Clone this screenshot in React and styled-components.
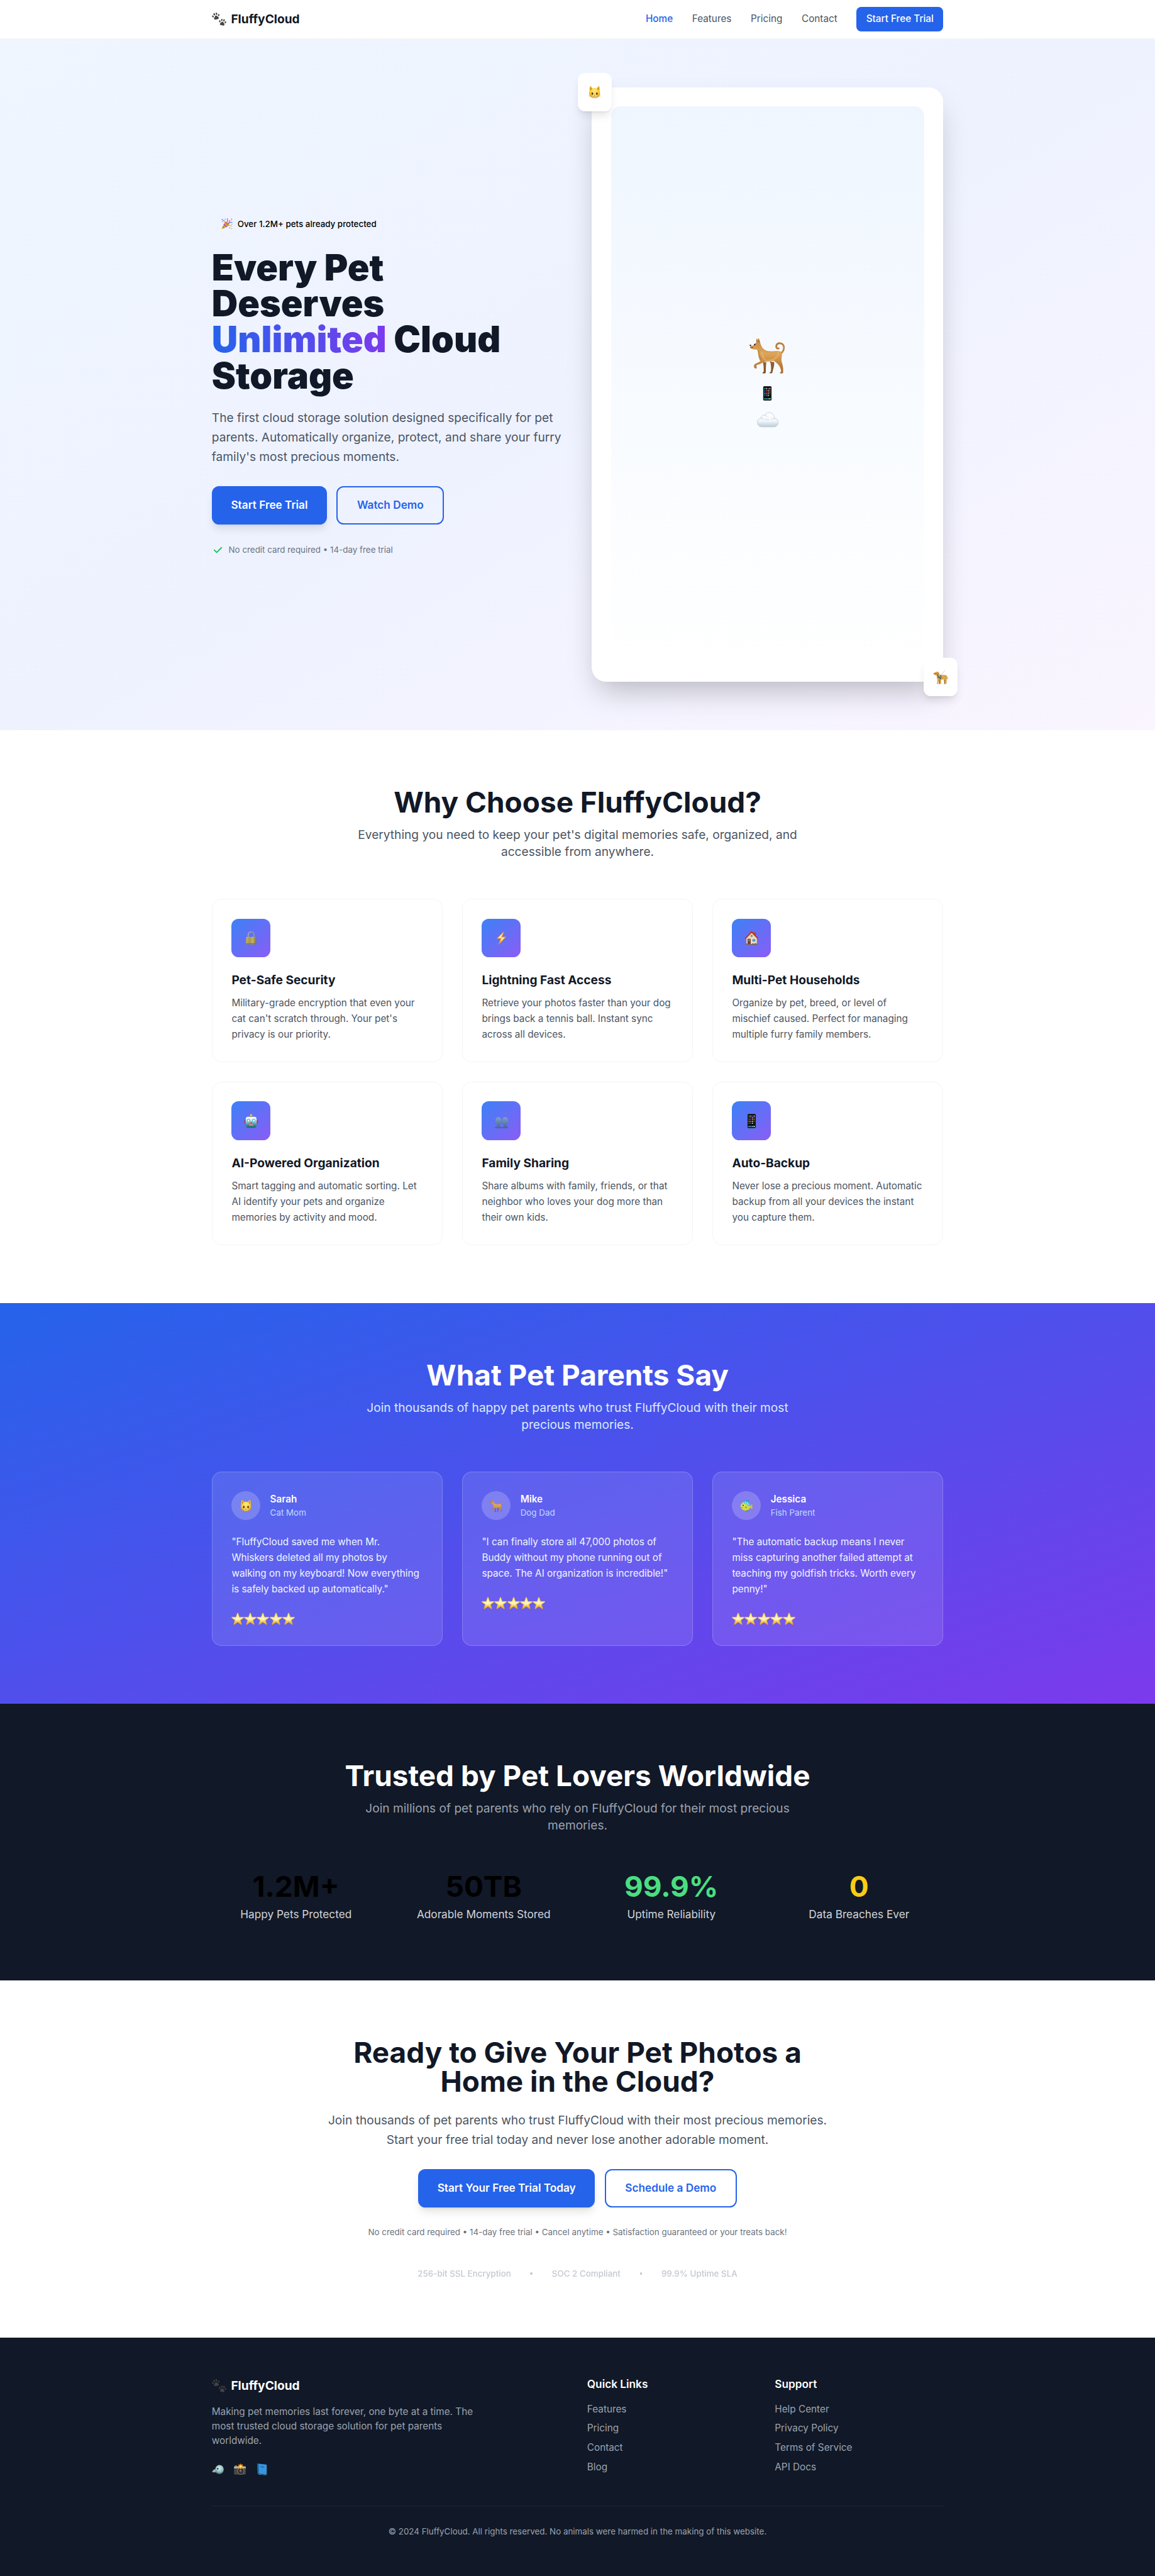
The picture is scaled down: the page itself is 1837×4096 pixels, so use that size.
import React from 'react';
import styled, { createGlobalStyle, css } from 'styled-components';

const GlobalStyle = createGlobalStyle`
  *, *::before, *::after { box-sizing: border-box; }
  html { font-size: 15.3083px; }
  body {
    margin: 0;
    background: #ffffff;
    color: #000000;
    font-family: Inter, "Liberation Sans", sans-serif;
    font-size: 1rem;
    line-height: 1.5rem;
    overflow-x: hidden;
  }
  h1, h2, h3, h4, p, ul { margin: 0; padding: 0; }
  ul { list-style: none; }
  a { color: inherit; text-decoration: none; }
`;

/* ---------- icons ---------- */

const Svg = styled.svg`
  display: block;
  flex: none;
  width: ${(p) => p.$size}rem;
  height: ${(p) => p.$size}rem;
  overflow: visible;
`;

const Paw = () => (
  <>
    <path d="M-3.9 4.1c-.5-2 1.6-2.6 2.3-4.2.6-1.3 2.6-1.300 3.200 0 .7 1.600 2.800 2.200 2.300 4.200-.4 1.500-2.100 1.300-3.900 1.300s-3.500.2-3.900-1.300z" />
    <ellipse cx="-4.9" cy="-.8" rx="1.250" ry="1.850" transform="rotate(-20 -4.900 -.8)" />
    <ellipse cx="-1.900" cy="-3.800" rx="1.300" ry="2" transform="rotate(-6 -1.900 -3.800)" />
    <ellipse cx="1.900" cy="-3.800" rx="1.300" ry="2" transform="rotate(6 1.900 -3.800)" />
    <ellipse cx="4.900" cy="-.8" rx="1.250" ry="1.850" transform="rotate(20 4.900 -.8)" />
  </>
);

const PawsIcon = ({ size, color }) => (
  <Svg $size={size} viewBox="0 0 24 24" fill={color}>
    <g transform="translate(6.700 7.100) rotate(-14)"><Paw /></g>
    <g transform="translate(17.700 17.200) rotate(10) scale(.96)"><Paw /></g>
  </Svg>
);

const PartyIcon = ({ size }) => (
  <Svg $size={size} viewBox="0 0 24 24">
    <path d="M7.500 7.500 16.500 16 1.500 23.200c-.8.3-1.300-.2-1-1z" fill="#f5b92e" />
    <path d="M6 11.500 12.600 18l-2.700 1.300-5.200-5zM3.700 16.700l3.700 3.800-2.400 1.100-2.200-2.500z" fill="#8a5bd0" />
    <ellipse cx="12" cy="11.800" rx="6.300" ry="2.500" transform="rotate(43 12 11.800)" fill="#d98a1c" />
    <path d="M11 10.500c2-2.500 3-6 1.500-9.500M13.500 12c3-1.500 4-4.500 3.500-7" stroke="#e0559b" strokeWidth="1.700" fill="none" strokeLinecap="round" />
    <path d="M14 12.500c2.500-2.500 5-4.500 9-4" stroke="#4c8fe6" strokeWidth="1.700" fill="none" strokeLinecap="round" />
    <path d="M15 14.500c2.500-.5 4.500.5 7 2.500" stroke="#f3c53a" strokeWidth="1.700" fill="none" strokeLinecap="round" />
    <path d="M1 2.500 7 6" stroke="#5a9cf0" strokeWidth="1.600" strokeLinecap="round" />
    <g fill="#e8639c"><circle cx="8" cy="2" r="1.100" /><circle cx="22" cy="2" r="1.200" /><circle cx="20" cy="5" r=".9" /></g>
    <g fill="#7a6be0"><circle cx="3" cy="7.500" r="1" /><circle cx="18" cy="20.500" r="1.100" /></g>
    <g fill="#ef7e4a"><circle cx="22.500" cy="13" r="1" /><circle cx="22" cy="22" r="1" /></g>
  </Svg>
);

const CatIcon = ({ size }) => (
  <Svg $size={size} viewBox="0 0 24 24">
    <defs>
      <radialGradient id="cat-fur" cx=".5" cy=".4" r=".65">
        <stop offset="0" stopColor="#ffe98a" /><stop offset=".55" stopColor="#f8cf3c" /><stop offset="1" stopColor="#d99a14" />
      </radialGradient>
    </defs>
    <path d="M3.600 1.700c.3-1 1.200-.9 2 0l3 3.200a16 16 0 0 1 6.800 0l3-3.200c.8-.9 1.700-1 2 0 .8 2.800.8 6 .5 8.300 1 2.200 1.100 4.500.3 6.700-1.300 3.400-4.500 5.600-9.200 5.600s-7.900-2.200-9.200-5.600c-.8-2.200-.7-4.500.3-6.700C2.800 7.700 2.800 4.500 3.600 1.700z" fill="url(#cat-fur)" />
    <path d="M4.700 3.300 7.300 6 4.600 8.700zM19.300 3.300 16.700 6l2.700 2.700z" fill="#c5800f" />
    <ellipse cx="8" cy="14.300" rx="1.300" ry="2.100" fill="#3a2408" />
    <ellipse cx="16" cy="14.300" rx="1.300" ry="2.100" fill="#3a2408" />
    <ellipse cx="12" cy="19" rx="3.600" ry="2.200" fill="#ffeeb0" />
    <path d="M10.900 16.800h2.200L12 18z" fill="#b25d3c" />
    <path d="M12 18v1c-.5 1-1.800 1.100-2.500.4M12 19c.5 1 1.800 1.100 2.500.4" stroke="#7a4a14" strokeWidth=".7" fill="none" strokeLinecap="round" />
    <path d="M1 17.500l3.500-.2M1.500 20l3.300-.9M23 17.500l-3.500-.2M22.500 20l-3.300-.9" stroke="#c79534" strokeWidth=".5" />
  </Svg>
);

const DogIcon = ({ size }) => (
  <Svg $size={size} viewBox="0 0 60 60">
    <defs>
      <linearGradient id="dog-coat" x1="0" y1="0" x2="0" y2="1">
        <stop offset="0" stopColor="#c78a45" /><stop offset=".45" stopColor="#dda558" /><stop offset="1" stopColor="#a8642c" />
      </linearGradient>
      <linearGradient id="dog-far" x1="0" y1="0" x2="0" y2="1">
        <stop offset="0" stopColor="#9c622e" /><stop offset="1" stopColor="#7d4a22" />
      </linearGradient>
    </defs>
    <path d="M34 39c3 1.500 5 1.500 7 1 .6 5-.5 9-1.800 13l-1 4c.2 1.300-.6 2-2 2h-2.600c-.3-1.300.7-2 2-2.400.8-5.600.6-11-1.600-17.600z" fill="url(#dog-far)" />
    <path d="M22 39c2 1.500 4.500 2 6 1.500-.6 5.500-1 11-.9 16.500.2 1.500-.5 2.200-2 2.200h-3.200c-.2-1.500.7-2.100 1.800-2.500.2-6-.2-12-1.700-17.700z" fill="url(#dog-far)" />
    <path d="M52.600 26c4-3.500 5.800-9 4-13-2-4.500-9-5.200-11.400-1.200-2 3.800 1 7.400 3.400 5.900" fill="none" stroke="#bd7c3b" strokeWidth="2.900" strokeLinecap="round" />
    <path d="M52.200 25c3.600-3.500 5.200-8 3.600-11.600" fill="none" stroke="#e0a65c" strokeWidth="1" strokeLinecap="round" />
    <path d="M11.500 8.200c-.4-2.600-.3-5.300.6-7.200 1 .8 1.600 2 1.900 3.200.1-1.600.4-3 1.100-4 1.400 2.600 2.300 5.400 2.900 8.300 1.300 4.400 3 8.200 6 10.600 3.500 3 8 3.300 12.500 3.400 5.500 0 11-1.200 15 .4 2.600 1.200 3 5 2.300 8.700-.6 3.500-1 6.500.2 9.800 1.500 4.400 2.300 9 2 15.300.1 1.900-.7 2.600-2.200 2.600h-3c-.2-1.600.8-2.400 2.100-2.800-.6-5.600-3-10.300-6.700-13.700-2.400-2-3.800-2.500-5.400-4.600-5 1.400-11 1.700-16 1.700-3.200 1.800-6.600 3.600-10.400 4.800-2.400.8-3.400 1.700-2.800 3.200.6 1.200.9 2.700-.3 3.300-1.800.6-3.700-1.300-3.900-3.700-.1-2.300 1.300-3.800 3.300-4.700l7.400-3.500c-2-3.200-3.300-8.300-3.900-14-.3-2.800-1-5-2.600-6-2.500.9-5 .3-7.600-.7-1.800-.6-3.100-1.700-3.100-3.300.2-1.300 1.500-1.800 3.200-1.900 2-.2 3.500-1.300 4.500-2.900.6-.9 1.700-2 2.900-2.300z" fill="url(#dog-coat)" />
    <path d="M20.500 24c1 5 2.500 10 6 13.500 8 1 15-1 19-5.500 2.500-3 3-6 2-8" fill="none" stroke="#e9ba72" strokeWidth="2.600" opacity=".6" strokeLinecap="round" />
    <path d="M15 21c.3 5.500 1.500 11 4.200 15.500" stroke="#b3783c" strokeWidth="1.800" fill="none" opacity=".7" />
    <path d="M12.100 7V2.900l1.100 4zM15.100 7.200l.3-4.600 1.200 5z" fill="#9a4936" />
    <ellipse cx="1.600" cy="12.600" rx="1.400" ry="1.200" fill="#2a2422" />
    <path d="M1.600 15.800c1.600.9 3.300.8 4.600-.2" stroke="#4a2d19" strokeWidth=".9" fill="none" />
    <circle cx="8.700" cy="11.500" r="1.200" fill="#23160e" />
  </Svg>
);

const GuideDogIcon = ({ size }) => (
  <Svg $size={size} viewBox="0 0 24 24">
    <path d="M12 9.500 18.800.6" stroke="#c9ccd2" strokeWidth=".8" />
    <path d="M12.500 10.500 17.500 3" stroke="#dfe1e5" strokeWidth=".5" />
    <path d="M8.500 16h2.600l-.4 6.700c0 .7-.3.9-.9.9H8c0-.8.400-1 .9-1.200zM17 16h2.500l-.2 6.700c0 .7-.3.9-.9.9h-1.600c0-.8.4-1 .9-1.200z" fill="#9a6a2c" />
    <path d="M.4 6.200c.7-1.400 2-2 3.200-2.300 2-1.500 4.700-.9 5.200 1.100.3 1.600.7 3 2.200 3.400 3.300.8 6.800-.4 9.500.4 1.800.7 2 3.200 2.800 4.900.4 1.200.4 2-.4 2.200-.8 0-1-1-1.300-1.900-.2 1.600 0 3 .1 4.400l-.4 4.300c0 .7-.3.9-.9.9h-1.700c0-.8.4-1.100 1-1.200l-.3-3.500-1.700-3.100c-2 .6-4 .8-5.400.7l-.1 6c0 .8-.3 1.100-.9 1.100H9.700c0-.9.4-1.200.9-1.300l-.3-5-1.700-1.500-1 6.700c-.1.800-.4 1.100-1 1.100H5c0-.9.300-1.200.8-1.300l.4-6.200c-.9-2-1-4.200-.9-6-.8 0-1.200-.3-1.600-1-1.300.3-2.800-.5-3.200-1.400-.3-.6-.3-1.100-.1-1.500z" fill="#dba447" />
    <path d="M6.200 5.300c1.500-.7 2.200.8 1.700 2.800-.3 1.200-1.300 1.600-1.900.8-.4-.9-.4-2.500.2-3.600z" fill="#b97d2c" />
    <path d="M5.700 8.800c2.500 1.600 4 4 5.500 7M12 8.600l-.3 7M5.600 12.500h7" stroke="#3d6070" strokeWidth="1.200" fill="none" />
    <circle cx=".8" cy="6.200" r=".7" fill="#2d211a" /><circle cx="3.700" cy="5.900" r=".6" fill="#2d211a" />
  </Svg>
);

const appRows = [
  ['#3ccf54', '#e8e8e8', '#b04cc8', '#f0f0f0'],
  ['#1e86f0', '#e0559b', '#e8e8e8', '#ef7e2e'],
  ['#2f9fe8', '#c04040', '#f0c030', '#3ccf54'],
  ['#e8b890', '#50c8e8', '#e8e8e8', '#d04848'],
  ['#2f7fe8', '#e04444', '#e8e8e8', '#333a44'],
];

const PhoneIcon = ({ size }) => (
  <Svg $size={size} viewBox="0 0 24 24">
    <rect x="5" y="0" width="14" height="24" rx="1.800" fill="#3a3d44" />
    <rect x="5.700" y=".7" width="12.600" height="22.600" rx="1.300" fill="#08090c" />
    {appRows.map((row, y) => row.map((fill, x) => (
      <rect key={`${x}-${y}`} x={6.9 + x * 2.8} y={2.9 + y * 3} width="1.800" height="1.800" rx=".4" fill={fill} />
    )))}
    <rect x="6.200" y="19.600" width="11.600" height="3" rx=".6" fill="#26343c" />
    <rect x="6.900" y="20.100" width="1.800" height="1.900" rx=".4" fill="#3ccf54" />
    <rect x="9.700" y="20.100" width="1.800" height="1.900" rx=".4" fill="#38a8f0" />
    <rect x="12.500" y="20.100" width="1.800" height="1.900" rx=".4" fill="#49d8a0" />
    <rect x="15.300" y="20.100" width="1.800" height="1.900" rx=".4" fill="#f0f0f0" />
  </Svg>
);

const CloudIcon = ({ size }) => (
  <Svg $size={size} viewBox="0 0 36 36">
    <defs>
      <linearGradient id="cloud-body" x1="0" y1="0" x2="0" y2="1">
        <stop offset="0" stopColor="#ffffff" /><stop offset=".6" stopColor="#f2f5f8" /><stop offset="1" stopColor="#bccbd8" />
      </linearGradient>
    </defs>
    <path d="M8.500 30C3.800 30 .6 27 .6 22.800c0-3.900 2.600-6.700 6-7.200.2-3.800 3.500-5.900 6.800-5.100C15 7.600 17.300 6.200 20.200 6.200c4.600 0 7.900 3 8.500 7.600.2.7.2 1.400.1 2 3.800.3 6.500 3.200 6.500 7 0 4.200-3.100 7.200-7.300 7.200z" fill="url(#cloud-body)" stroke="#b7c6d4" strokeWidth=".8" />
    <path d="M6.800 15.800c1.800-.4 3.800.2 5 1.800M13.500 10.800c1.500.4 2.600 1.300 3.300 2.400M14 19.500c.8-2 3-3 5.300-1.700M28.500 16c-1.700 0-3.200.7-4.300 2.200" fill="none" stroke="#c3d0dc" strokeWidth=".9" strokeLinecap="round" />
  </Svg>
);

const LockIcon = ({ size }) => (
  <Svg $size={size} viewBox="0 0 24 24">
    <defs>
      <linearGradient id="lock-brass" x1="0" y1="0" x2="1" y2="0">
        <stop offset="0" stopColor="#c9b756" /><stop offset=".4" stopColor="#aa9c52" /><stop offset=".65" stopColor="#cbbb66" /><stop offset="1" stopColor="#827536" />
      </linearGradient>
    </defs>
    <path d="M7.200 11V7.300C7.200 4.200 9 2 12 2s4.800 2.200 4.800 5.300V11" fill="none" stroke="#8d97a8" strokeWidth="2" />
    <path d="M6.700 10V7.300C6.700 3.900 8.800 1.600 12 1.600" fill="none" stroke="#bcc5d2" strokeWidth=".7" />
    <rect x="3.600" y="10.200" width="16.800" height="12.300" rx=".8" fill="url(#lock-brass)" />
    <path d="M3.600 20.500h16.800v1.200c0 .5-.3.800-.8.800H4.400c-.5 0-.8-.3-.8-.8z" fill="#7d7030" opacity=".7" />
    <path d="M3.600 13.500h16.800M3.600 17h16.800" stroke="#8f8240" strokeWidth=".4" />
  </Svg>
);

const BoltIcon = ({ size }) => (
  <Svg $size={size} viewBox="0 0 24 24">
    <path d="M17 .3 3.700 13.200h6.900L6.800 23.700 20.300 10h-7z" fill="#f29a16" />
    <path d="M15 3 6 12.200h6.300L9.600 19.500 17.800 11h-6.200z" fill="#ffe98a" />
  </Svg>
);

const HouseIcon = ({ size }) => (
  <Svg $size={size} viewBox="0 0 24 24">
    <rect x="15.500" y="2.500" width="3.300" height="6" fill="#9b4a36" />
    <path d="M3.300 12 12 3l8.700 9v10.500H3.300z" fill="#ead9b4" />
    <path d="M12 0 .7 12.200l1.500 1.400L12 3.600l9.800 10 1.500-1.400z" fill="#c2362b" />
    <circle cx="12" cy="8.600" r="1.500" fill="#4d79a8" />
    <rect x="5.200" y="13.300" width="5.200" height="9.200" fill="#7a4226" /><rect x="6.300" y="14.300" width="3" height="3" fill="#58869d" />
    <rect x="12.700" y="13.500" width="6" height="5" fill="#4f93cc" stroke="#fff7e4" strokeWidth=".7" />
    <path d="M1.500 22c1-1.500 2.800-1.500 3.500 0M12 22.500c1-2 3-2 4-.5 1-1.800 3.500-2 5.500.5z" fill="#568638" />
    <rect x="1.700" y="22" width="20.600" height="1.400" fill="#7d6a55" />
  </Svg>
);

const RobotIcon = ({ size }) => (
  <Svg $size={size} viewBox="0 0 24 24">
    <defs>
      <linearGradient id="robot-face" x1="0" y1="0" x2="0" y2="1">
        <stop offset="0" stopColor="#f6ffff" /><stop offset=".35" stopColor="#cdeeee" /><stop offset=".65" stopColor="#4aa3a8" /><stop offset="1" stopColor="#17626d" />
      </linearGradient>
    </defs>
    <rect x=".9" y="10.200" width="3" height="6.500" rx="1.200" fill="#b83246" /><rect x="20.100" y="10.200" width="3" height="6.500" rx="1.200" fill="#b83246" />
    <rect x="10" y="3" width="4" height="3" rx=".8" fill="#8a3a50" />
    <circle cx="12" cy="2.500" r="2.100" fill="#f8a51d" /><circle cx="11.600" cy="1.900" r=".9" fill="#ffe07a" />
    <path d="M6.500 5h11c2 0 3.300 1.300 3.400 3.200l.5 9.500c0 3.400-2 5.600-5 5.600H7.600c-3 0-5-2.200-5-5.600l.5-9.500C3.200 6.300 4.500 5 6.500 5z" fill="url(#robot-face)" />
    <circle cx="7.600" cy="11.500" r="2.900" fill="#2fb6d6" /><circle cx="16.400" cy="11.500" r="2.900" fill="#2fb6d6" />
    <circle cx="7.600" cy="11.500" r="1.700" fill="#f5ffff" /><circle cx="16.400" cy="11.500" r="1.700" fill="#f5ffff" />
    <path d="M12 12.500 14 16h-4z" fill="#d8403d" />
    <rect x="7.300" y="17" width="9.400" height="3" rx="1.400" fill="#a9423f" />
    <path d="M9.200 17.600v1.800M11 17.600v1.800M13 17.600v1.800M14.800 17.600v1.800" stroke="#eef2f2" strokeWidth="1.100" />
  </Svg>
);

const PeopleIcon = ({ size }) => (
  <Svg $size={size} viewBox="0 0 24 24">
    <defs>
      <linearGradient id="bust" x1="0" y1="0" x2="0" y2="1">
        <stop offset="0" stopColor="#7ba0d0" /><stop offset="1" stopColor="#46668c" />
      </linearGradient>
    </defs>
    <path d="M18.300 5.600c3 0 5 2.300 5 5.700 0 3.300-1.400 5.800-2.900 6.900v2c0 1.300 3 1.400 3 3.600H12.500c0-2.200 3.700-2.300 3.700-3.600v-2c-1.700-1.100-2.900-3.600-2.900-6.900 0-3.400 2-5.700 5-5.700z" fill="url(#bust)" />
    <path d="M7 5.600c3 0 5 2.300 5 5.700 0 3.300-1.400 5.800-2.900 6.900v2c0 1.300 3.700 1.400 3.700 3.600H.6c0-2.200 4.300-2.300 4.300-3.600v-2C3.200 17.100 2 14.600 2 11.300c0-3.400 2-5.700 5-5.700z" fill="url(#bust)" />
  </Svg>
);

const FishIcon = ({ size }) => (
  <Svg $size={size} viewBox="0 0 24 24">
    <path d="M9 4.500C11 1.800 14 .8 16.500 1.200c-.6 1.600-.2 3 .8 5z" fill="#2f9fb4" />
    <path d="M17.500 14.500c2-3.600 4-5 5.900-4.800-.7 2.300-.8 4.300.2 7.600-2.400.5-4.600-.3-6.100-2.800z" fill="#e0bf22" />
    <path d="M10 20c1 1.800 2.800 3 5 2.700-.4-1.400-.3-2.600.6-4z" fill="#3f8e50" />
    <path d="M.6 13C1.600 7.500 5.500 4 10.500 4c5 0 8.700 4 8.900 9-.3 4.600-4 8.200-8.900 8.200-4.700 0-8.400-2.700-9.900-8.200z" fill="#cfdc3c" />
    <path d="M6.500 4.800C12 2.300 19 5.500 19.400 13.200c-2.700.6-5.700-.9-6.600-3.700-2.800.2-5.500-1.200-6.300-4.700z" fill="#45c6dc" />
    <path d="M10 5c.2 2.300 1 3.500 2.300 4.200M13.800 5.500c.2 2.500 1.200 4.500 3 5.500" stroke="#e6fbfa" strokeWidth="1.100" fill="none" />
    <circle cx="6" cy="11.300" r="2.200" fill="#f7fbe8" /><circle cx="5.800" cy="11.400" r="1.300" fill="#16252a" />
    <path d="M1.500 15.300c1.300.6 2.600.4 3.500-.5" stroke="#6b8420" strokeWidth=".8" fill="none" />
    <path d="M9.500 13.500c2 0 3.600 1 4 3-2 .5-3.800-.3-4-3z" fill="#7daa32" />
  </Svg>
);

const StarIcon = ({ size }) => (
  <Svg $size={size} viewBox="0 0 24 24">
    <defs>
      <linearGradient id="star-gold" x1="0" y1="0" x2="0" y2="1">
        <stop offset="0" stopColor="#fbe48a" /><stop offset=".5" stopColor="#ffee8a" /><stop offset="1" stopColor="#eda30f" />
      </linearGradient>
    </defs>
    <path d="M12 .8c.5 0 .8.3 1 .9l2.300 6.900h7.400c1.200 0 1.400 1 .5 1.700l-5.900 4.400 2.200 7.200c.3 1-.5 1.500-1.400.9L12 18.400l-6.100 4.400c-.9.6-1.700.1-1.400-.9l2.200-7.200-5.900-4.400C-.1 9.600.1 8.600 1.300 8.600h7.400L11 1.700c.2-.6.5-.9 1-.9z" fill="url(#star-gold)" stroke="#e5a31c" strokeWidth=".6" />
    <path d="M12 5.500l1.800 5.300 5 .1-4.200 3 .9 3L12 14.500l-3.500 2.400.9-3-4.200-3 5-.1z" fill="#fffbdc" opacity=".7" />
  </Svg>
);

const BirdIcon = ({ size }) => (
  <Svg $size={size} viewBox="0 0 20 20">
    <defs>
      <radialGradient id="bird-head" cx=".5" cy=".35" r=".7">
        <stop offset="0" stopColor="#d5ecea" /><stop offset=".6" stopColor="#8fbcbe" /><stop offset="1" stopColor="#2f5e66" />
      </radialGradient>
    </defs>
    <path d="M7 8.500C4 9.500 1.500 11.500.2 14.200c2.300.9 5 .9 8 .3z" fill="#b9bfc2" />
    <path d="M1.500 13.500c2 .4 4 .3 6-.3" stroke="#6f7679" strokeWidth=".6" fill="none" />
    <path d="M5.600 9C6.500 5 9 2.600 12.500 2.600c4.200 0 7.200 3.300 7.200 7.700 0 4.300-3 7.400-7.200 7.400-3.400 0-6-1.500-6.700-4.300z" fill="url(#bird-head)" />
    <circle cx="10" cy="8.900" r="2" fill="#f4f7f6" /><circle cx="9.800" cy="9" r="1.300" fill="#17191b" />
  </Svg>
);

const CameraIcon = ({ size }) => (
  <Svg $size={size} viewBox="0 0 20 20">
    <rect x=".2" y="5" width="19.600" height="13.600" rx="1.600" fill="#4a4744" />
    <path d="M.2 8V6.600C.2 5.500.8 5 1.800 5h16.400c1 0 1.600.5 1.600 1.600V8z" fill="#b9b8b4" />
    <rect x="1.500" y="3.500" width="4" height="2" rx=".6" fill="#8a8883" />
    <circle cx="11.500" cy="12.800" r="5.700" fill="#8c8a86" /><circle cx="11.500" cy="12.800" r="4.700" fill="#26282b" />
    <circle cx="11.500" cy="12.800" r="2.600" fill="#49505b" /><circle cx="10.700" cy="12" r=".9" fill="#9aa6b5" />
    <path d="M11.200-.2l1.100 2.600 2.800-1.100-.9 2.700 2.500 1.200-2.600 1.200.9 2.600-2.700-1-1.100 2.500-1.200-2.500-2.600 1 .9-2.600-2.600-1.200 2.600-1.200-.9-2.700 2.600 1.100z" fill="#f59a1c" />
    <circle cx="11.200" cy="5.200" r="1.700" fill="#fff0a0" />
  </Svg>
);

const BookIcon = ({ size }) => (
  <Svg $size={size} viewBox="0 0 20 20">
    <path d="M4.500 18.300 16.300 19.400 18 18.500V3z" fill="#d7dde2" />
    <path d="M2.300.6 4.200.2 17.700 1.800 18 17.800 16.700 19.500 3 17.800z" fill="#195f9c" />
    <path d="M4.600.9 17.700 2.200 17.300 18 4.800 16.600z" fill="#3b97dc" />
    <path d="M2.300.6 4.600.9 4.800 16.600 3 17.600z" fill="#1a6cb0" />
    <path d="M7.500 4.500l6.800.7M8.500 6.500l4.800.5" stroke="#1c66a6" strokeWidth="1" />
  </Svg>
);

const CheckIcon = ({ size }) => (
  <Svg $size={size} viewBox="0 0 20 20" fill="#22c55e">
    <path fillRule="evenodd" clipRule="evenodd" d="M16.707 5.293a1 1 0 010 1.414l-8 8a1 1 0 01-1.414 0l-4-4a1 1 0 011.414-1.414L8 12.586l7.293-7.293a1 1 0 011.414 0z" />
  </Svg>
);

/* ---------- shared ---------- */

const Container = styled.div`
  max-width: 80rem;
  margin: 0 auto;
  padding: 0 2rem;
`;

const Button = styled.a`
  display: inline-flex;
  align-items: center;
  justify-content: center;
  white-space: nowrap;
  border-radius: 0.75rem;
  padding: 1rem 2rem;
  font-size: 1.125rem;
  line-height: 1.75rem;
  font-weight: 600;
  ${(p) => p.$outline
    ? css`
        border: 2px solid #2563eb;
        color: #2563eb;
      `
    : css`
        background: #2563eb;
        color: #ffffff;
        box-shadow: 0 0.625rem 0.9375rem -0.1875rem rgba(0, 0, 0, 0.1), 0 0.25rem 0.375rem -0.25rem rgba(0, 0, 0, 0.1);
      `}
`;

const ButtonRow = styled.div`
  display: flex;
  justify-content: ${(p) => (p.$center ? 'center' : 'flex-start')};
  gap: 1rem;
  height: 4rem;
  margin-top: 2rem;
`;

const SectionHeading = styled.div`
  text-align: center;
  margin-bottom: 4rem;
`;

const SectionTitle = styled.h2`
  font-size: 3rem;
  line-height: 1;
  font-weight: 700;
  color: ${(p) => p.$color || '#111827'};
`;

const SectionSub = styled.p`
  margin-top: 1rem;
  font-size: 1.25rem;
  line-height: 1.75rem;
  color: ${(p) => p.$color || '#4b5563'};
`;

const Brand = styled.div`
  display: flex;
  align-items: center;
  gap: 0.5rem;
  height: 2rem;
  font-size: 1.25rem;
  line-height: 1.75rem;
  font-weight: 700;
  color: ${(p) => p.$color};
`;

/* ---------- header ---------- */

const Header = styled.header`
  background: #ffffff;
  border-bottom: 1px solid #f3f4f6;
`;

const Bar = styled(Container)`
  display: flex;
  align-items: center;
  justify-content: space-between;
  height: 4rem;
`;

const Nav = styled.nav`
  display: flex;
  align-items: center;
  gap: 2rem;
`;

const NavLink = styled.a`
  color: ${(p) => (p.$active ? '#2563eb' : '#4b5563')};
  font-weight: ${(p) => (p.$active ? 500 : 400)};
`;

const NavButton = styled.a`
  background: #2563eb;
  color: #ffffff;
  font-weight: 500;
  padding: 0.5rem 1rem;
  border-radius: 0.5rem;
`;

/* ---------- hero ---------- */

const Hero = styled.section`
  background: linear-gradient(to bottom right, #eff6ff, #eef2ff, #faf5ff);
  padding: 5rem 0;
`;

const HeroGrid = styled(Container)`
  display: grid;
  grid-template-columns: 1fr 1fr;
  gap: 3rem;
  align-items: center;
`;

const Pill = styled.div`
  display: flex;
  align-items: center;
  gap: 0.5rem;
  height: 2.25rem;
  padding: 0 1rem;
  font-size: 0.875rem;
  font-weight: 500;
`;

const HeroTitle = styled.h1`
  margin-top: 1.5rem;
  font-size: 3.75rem;
  line-height: 1;
  font-weight: 900;
  color: #111827;
`;

const Gradient = styled.span`
  background: linear-gradient(to right, #2563eb, #7c3aed);
  -webkit-background-clip: text;
  background-clip: text;
  color: transparent;
`;

const Lead = styled.p`
  margin-top: 1.5rem;
  font-size: 1.25rem;
  line-height: 1.625;
  color: #4b5563;
`;

const Assurance = styled.div`
  display: flex;
  align-items: center;
  gap: 0.5rem;
  margin-top: 2rem;
  font-size: 0.875rem;
  line-height: 1.25rem;
  color: #6b7280;
`;

const Device = styled.div`
  position: relative;
  padding: 2rem;
  background: #ffffff;
  border-radius: 1.5rem;
  box-shadow: 0 1.5625rem 3.125rem -0.75rem rgba(0, 0, 0, 0.25);
`;

const Screen = styled.div`
  display: flex;
  flex-direction: column;
  align-items: center;
  justify-content: center;
  aspect-ratio: 9 / 16;
  border-radius: 1rem;
  background: linear-gradient(to bottom, #eff6ff, #ffffff);
`;

const ScreenItem = styled.div`
  display: flex;
  align-items: center;
  height: ${(p) => p.$height}rem;
  margin-top: ${(p) => p.$top || 0}rem;
`;

const FloatingBadge = styled.div`
  position: absolute;
  display: flex;
  align-items: center;
  justify-content: center;
  width: 3.55rem;
  height: 4rem;
  background: #ffffff;
  border-radius: 0.75rem;
  box-shadow: 0 0.625rem 0.9375rem -0.1875rem rgba(0, 0, 0, 0.1), 0 0.25rem 0.375rem -0.25rem rgba(0, 0, 0, 0.1);
  ${(p) => (p.$corner === 'start'
    ? css`top: -1.5rem; left: -1.5rem;`
    : css`bottom: -1.5rem; right: -1.5rem;`)}
`;

/* ---------- features ---------- */

const Section = styled.section`
  padding: 6rem 0;
  background: ${(p) => p.$bg || '#ffffff'};
`;

const CardGrid = styled.div`
  display: grid;
  grid-template-columns: repeat(3, 1fr);
  gap: 2rem;
`;

const FeatureCard = styled.article`
  padding: 2rem;
  border: 1px solid #f3f4f6;
  border-radius: 1rem;
  background: #ffffff;
`;

const FeatureIcon = styled.div`
  display: flex;
  align-items: center;
  justify-content: center;
  width: 4rem;
  height: 4rem;
  border-radius: 0.75rem;
  background: linear-gradient(to bottom right, #3b82f6, #8b5cf6);
`;

const FeatureTitle = styled.h3`
  margin-top: 1.5rem;
  font-size: 1.25rem;
  line-height: 1.75rem;
  font-weight: 700;
  color: #111827;
`;

const FeatureText = styled.p`
  margin-top: 0.75rem;
  line-height: 1.625;
  color: #4b5563;
`;

/* ---------- testimonials ---------- */

const QuoteCard = styled.article`
  padding: 2rem;
  border: 1px solid rgba(255, 255, 255, 0.2);
  border-radius: 1rem;
  background: rgba(255, 255, 255, 0.1);
`;

const Person = styled.div`
  display: flex;
  align-items: center;
  gap: 1rem;
`;

const Avatar = styled.div`
  display: flex;
  align-items: center;
  justify-content: center;
  width: 3rem;
  height: 3rem;
  border-radius: 50%;
  background: rgba(255, 255, 255, 0.2);
`;

const PersonName = styled.div`
  font-weight: 600;
  color: #ffffff;
`;

const PersonRole = styled.div`
  font-size: 0.875rem;
  line-height: 1.25rem;
  color: #bfdbfe;
`;

const Quote = styled.p`
  margin-top: 1.5rem;
  line-height: 1.625;
  color: #eff6ff;
`;

const Stars = styled.div`
  display: flex;
  align-items: center;
  height: 1.5rem;
  margin-top: 1.5rem;
`;

/* ---------- stats ---------- */

const StatGrid = styled.div`
  display: grid;
  grid-template-columns: repeat(4, 1fr);
  gap: 2rem;
  text-align: center;
`;

const StatValue = styled.div`
  font-size: 3rem;
  line-height: 1;
  font-weight: 700;
  color: ${(p) => p.$color};
`;

const StatLabel = styled.div`
  margin-top: 0.5rem;
  font-size: 1.125rem;
  line-height: 1.75rem;
  color: #d1d5db;
`;

/* ---------- call to action ---------- */

const Centered = styled(Container)`
  text-align: center;
`;

const FinePrint = styled.p`
  margin-top: 2rem;
  font-size: 0.875rem;
  line-height: 1.25rem;
  color: #6b7280;
`;

const TrustRow = styled.div`
  display: flex;
  align-items: center;
  justify-content: center;
  gap: 2rem;
  margin-top: 3rem;
  font-size: 0.875rem;
  line-height: 1.25rem;
  font-weight: 500;
  color: #9ca3af;
  opacity: 0.6;
`;

const TrustDot = styled.span`
  width: 0.25rem;
  height: 0.25rem;
  border-radius: 50%;
  background: #9ca3af;
`;

/* ---------- footer ---------- */

const Footer = styled.footer`
  padding: 4rem 0;
  background: #111827;
`;

const FooterGrid = styled.div`
  display: grid;
  grid-template-columns: repeat(4, 1fr);
  gap: 2rem;
`;

const FooterAbout = styled.div`
  grid-column: span 2;
`;

const Tagline = styled.p`
  max-width: 28rem;
  margin-top: 1rem;
  color: #9ca3af;
`;

const Socials = styled.div`
  display: flex;
  align-items: center;
  gap: 1.05rem;
  height: 1.5rem;
  margin-top: 1.5rem;
`;

const FooterTitle = styled.h4`
  font-size: 1.125rem;
  line-height: 1.75rem;
  font-weight: 600;
  color: #ffffff;
`;

const FooterLinks = styled.ul`
  display: flex;
  flex-direction: column;
  gap: 0.5rem;
  margin-top: 1rem;
  color: #9ca3af;
`;

const Copyright = styled.div`
  margin-top: 3rem;
  padding-top: 2rem;
  border-top: 1px solid #1f2937;
  text-align: center;
  font-size: 0.875rem;
  line-height: 1.25rem;
  color: #9ca3af;
`;

/* ---------- content ---------- */

const features = [
  { Icon: LockIcon, title: 'Pet-Safe Security', lines: ['Military-grade encryption that even your', "cat can't scratch through. Your pet's", 'privacy is our priority.'] },
  { Icon: BoltIcon, title: 'Lightning Fast Access', lines: ['Retrieve your photos faster than your dog', 'brings back a tennis ball. Instant sync', 'across all devices.'] },
  { Icon: HouseIcon, title: 'Multi-Pet Households', lines: ['Organize by pet, breed, or level of', 'mischief caused. Perfect for managing', 'multiple furry family members.'] },
  { Icon: RobotIcon, title: 'AI-Powered Organization', lines: ['Smart tagging and automatic sorting. Let', 'AI identify your pets and organize', 'memories by activity and mood.'] },
  { Icon: PeopleIcon, title: 'Family Sharing', lines: ['Share albums with family, friends, or that', 'neighbor who loves your dog more than', 'their own kids.'] },
  { Icon: PhoneIcon, title: 'Auto-Backup', lines: ['Never lose a precious moment. Automatic', 'backup from all your devices the instant', 'you capture them.'] },
];

const testimonials = [
  { Icon: CatIcon, name: 'Sarah', role: 'Cat Mom', lines: ['"FluffyCloud saved me when Mr.', 'Whiskers deleted all my photos by', 'walking on my keyboard! Now everything', 'is safely backed up automatically."'] },
  { Icon: DogIcon, name: 'Mike', role: 'Dog Dad', lines: ['"I can finally store all 47,000 photos of', 'Buddy without my phone running out of', 'space. The AI organization is incredible!"'] },
  { Icon: FishIcon, name: 'Jessica', role: 'Fish Parent', lines: ['"The automatic backup means I never', 'miss capturing another failed attempt at', 'teaching my goldfish tricks. Worth every', 'penny!"'] },
];

const stats = [
  { value: '1.2M+', label: 'Happy Pets Protected', color: '#000000' },
  { value: '50TB', label: 'Adorable Moments Stored', color: '#000000' },
  { value: '99.9%', label: 'Uptime Reliability', color: '#4ade80' },
  { value: '0', label: 'Data Breaches Ever', color: '#facc15' },
];

const Lines = ({ of }) => of.map((line, i) => (
  <React.Fragment key={line}>
    {i > 0 && <br />}
    {line}
  </React.Fragment>
));

export default function App() {
  return (
    <>
      <GlobalStyle />
      <Header>
        <Bar>
          <Brand $color="#111827"><PawsIcon size={1.5} color="#454545" />FluffyCloud</Brand>
          <Nav>
            <NavLink $active>Home</NavLink>
            <NavLink>Features</NavLink>
            <NavLink>Pricing</NavLink>
            <NavLink>Contact</NavLink>
            <NavButton>Start Free Trial</NavButton>
          </Nav>
        </Bar>
      </Header>

      <Hero>
        <HeroGrid>
          <div>
            <Pill><PartyIcon size={1.17} />Over 1.2M+ pets already protected</Pill>
            <HeroTitle>
              Every Pet<br />Deserves<br /><Gradient>Unlimited</Gradient> Cloud<br />Storage
            </HeroTitle>
            <Lead>
              <Lines of={['The first cloud storage solution designed specifically for pet', 'parents. Automatically organize, protect, and share your furry', "family's most precious moments."]} />
            </Lead>
            <ButtonRow>
              <Button>Start Free Trial</Button>
              <Button $outline>Watch Demo</Button>
            </ButtonRow>
            <Assurance><CheckIcon size={1.25} />No credit card required • 14-day free trial</Assurance>
          </div>
          <Device>
            <Screen>
              <ScreenItem $height={3.75}><DogIcon size={3.75} /></ScreenItem>
              <ScreenItem $height={2} $top={1}><PhoneIcon size={1.5} /></ScreenItem>
              <ScreenItem $height={2.5} $top={0.5}><CloudIcon size={2.25} /></ScreenItem>
            </Screen>
            <FloatingBadge $corner="start"><CatIcon size={1.4} /></FloatingBadge>
            <FloatingBadge $corner="end"><GuideDogIcon size={1.5} /></FloatingBadge>
          </Device>
        </HeroGrid>
      </Hero>

      <Section>
        <Container>
          <SectionHeading>
            <SectionTitle>Why Choose FluffyCloud?</SectionTitle>
            <SectionSub>
              <Lines of={["Everything you need to keep your pet's digital memories safe, organized, and", 'accessible from anywhere.']} />
            </SectionSub>
          </SectionHeading>
          <CardGrid>
            {features.map(({ Icon, title, lines }) => (
              <FeatureCard key={title}>
                <FeatureIcon><Icon size={1.5} /></FeatureIcon>
                <FeatureTitle>{title}</FeatureTitle>
                <FeatureText><Lines of={lines} /></FeatureText>
              </FeatureCard>
            ))}
          </CardGrid>
        </Container>
      </Section>

      <Section $bg="linear-gradient(to bottom right, #2563eb, #7c3aed)">
        <Container>
          <SectionHeading>
            <SectionTitle $color="#ffffff">What Pet Parents Say</SectionTitle>
            <SectionSub $color="#dbeafe">
              <Lines of={['Join thousands of happy pet parents who trust FluffyCloud with their most', 'precious memories.']} />
            </SectionSub>
          </SectionHeading>
          <CardGrid>
            {testimonials.map(({ Icon, name, role, lines }) => (
              <QuoteCard key={name}>
                <Person>
                  <Avatar><Icon size={1.33} /></Avatar>
                  <div>
                    <PersonName>{name}</PersonName>
                    <PersonRole>{role}</PersonRole>
                  </div>
                </Person>
                <Quote><Lines of={lines} /></Quote>
                <Stars>{[1, 2, 3, 4, 5].map((n) => <StarIcon key={n} size={1.31} />)}</Stars>
              </QuoteCard>
            ))}
          </CardGrid>
        </Container>
      </Section>

      <Section $bg="#111827">
        <Container>
          <SectionHeading>
            <SectionTitle $color="#ffffff">Trusted by Pet Lovers Worldwide</SectionTitle>
            <SectionSub $color="#9ca3af">
              <Lines of={['Join millions of pet parents who rely on FluffyCloud for their most precious', 'memories.']} />
            </SectionSub>
          </SectionHeading>
          <StatGrid>
            {stats.map((s) => (
              <div key={s.label}>
                <StatValue $color={s.color}>{s.value}</StatValue>
                <StatLabel>{s.label}</StatLabel>
              </div>
            ))}
          </StatGrid>
        </Container>
      </Section>

      <Section>
        <Centered>
          <SectionTitle>Ready to Give Your Pet Photos a<br />Home in the Cloud?</SectionTitle>
          <Lead>
            <Lines of={['Join thousands of pet parents who trust FluffyCloud with their most precious memories.', 'Start your free trial today and never lose another adorable moment.']} />
          </Lead>
          <ButtonRow $center>
            <Button>Start Your Free Trial Today</Button>
            <Button $outline>Schedule a Demo</Button>
          </ButtonRow>
          <FinePrint>No credit card required • 14-day free trial • Cancel anytime • Satisfaction guaranteed or your treats back!</FinePrint>
          <TrustRow>
            <span>256-bit SSL Encryption</span>
            <TrustDot />
            <span>SOC 2 Compliant</span>
            <TrustDot />
            <span>99.9% Uptime SLA</span>
          </TrustRow>
        </Centered>
      </Section>

      <Footer>
        <Container>
          <FooterGrid>
            <FooterAbout>
              <Brand $color="#ffffff"><PawsIcon size={1.5} color="#424242" />FluffyCloud</Brand>
              <Tagline>
                <Lines of={['Making pet memories last forever, one byte at a time. The', 'most trusted cloud storage solution for pet parents', 'worldwide.']} />
              </Tagline>
              <Socials><BirdIcon size={1.25} /><CameraIcon size={1.25} /><BookIcon size={1.25} /></Socials>
            </FooterAbout>
            <div>
              <FooterTitle>Quick Links</FooterTitle>
              <FooterLinks><li>Features</li><li>Pricing</li><li>Contact</li><li>Blog</li></FooterLinks>
            </div>
            <div>
              <FooterTitle>Support</FooterTitle>
              <FooterLinks><li>Help Center</li><li>Privacy Policy</li><li>Terms of Service</li><li>API Docs</li></FooterLinks>
            </div>
          </FooterGrid>
          <Copyright>© 2024 FluffyCloud. All rights reserved. No animals were harmed in the making of this website.</Copyright>
        </Container>
      </Footer>
    </>
  );
}
